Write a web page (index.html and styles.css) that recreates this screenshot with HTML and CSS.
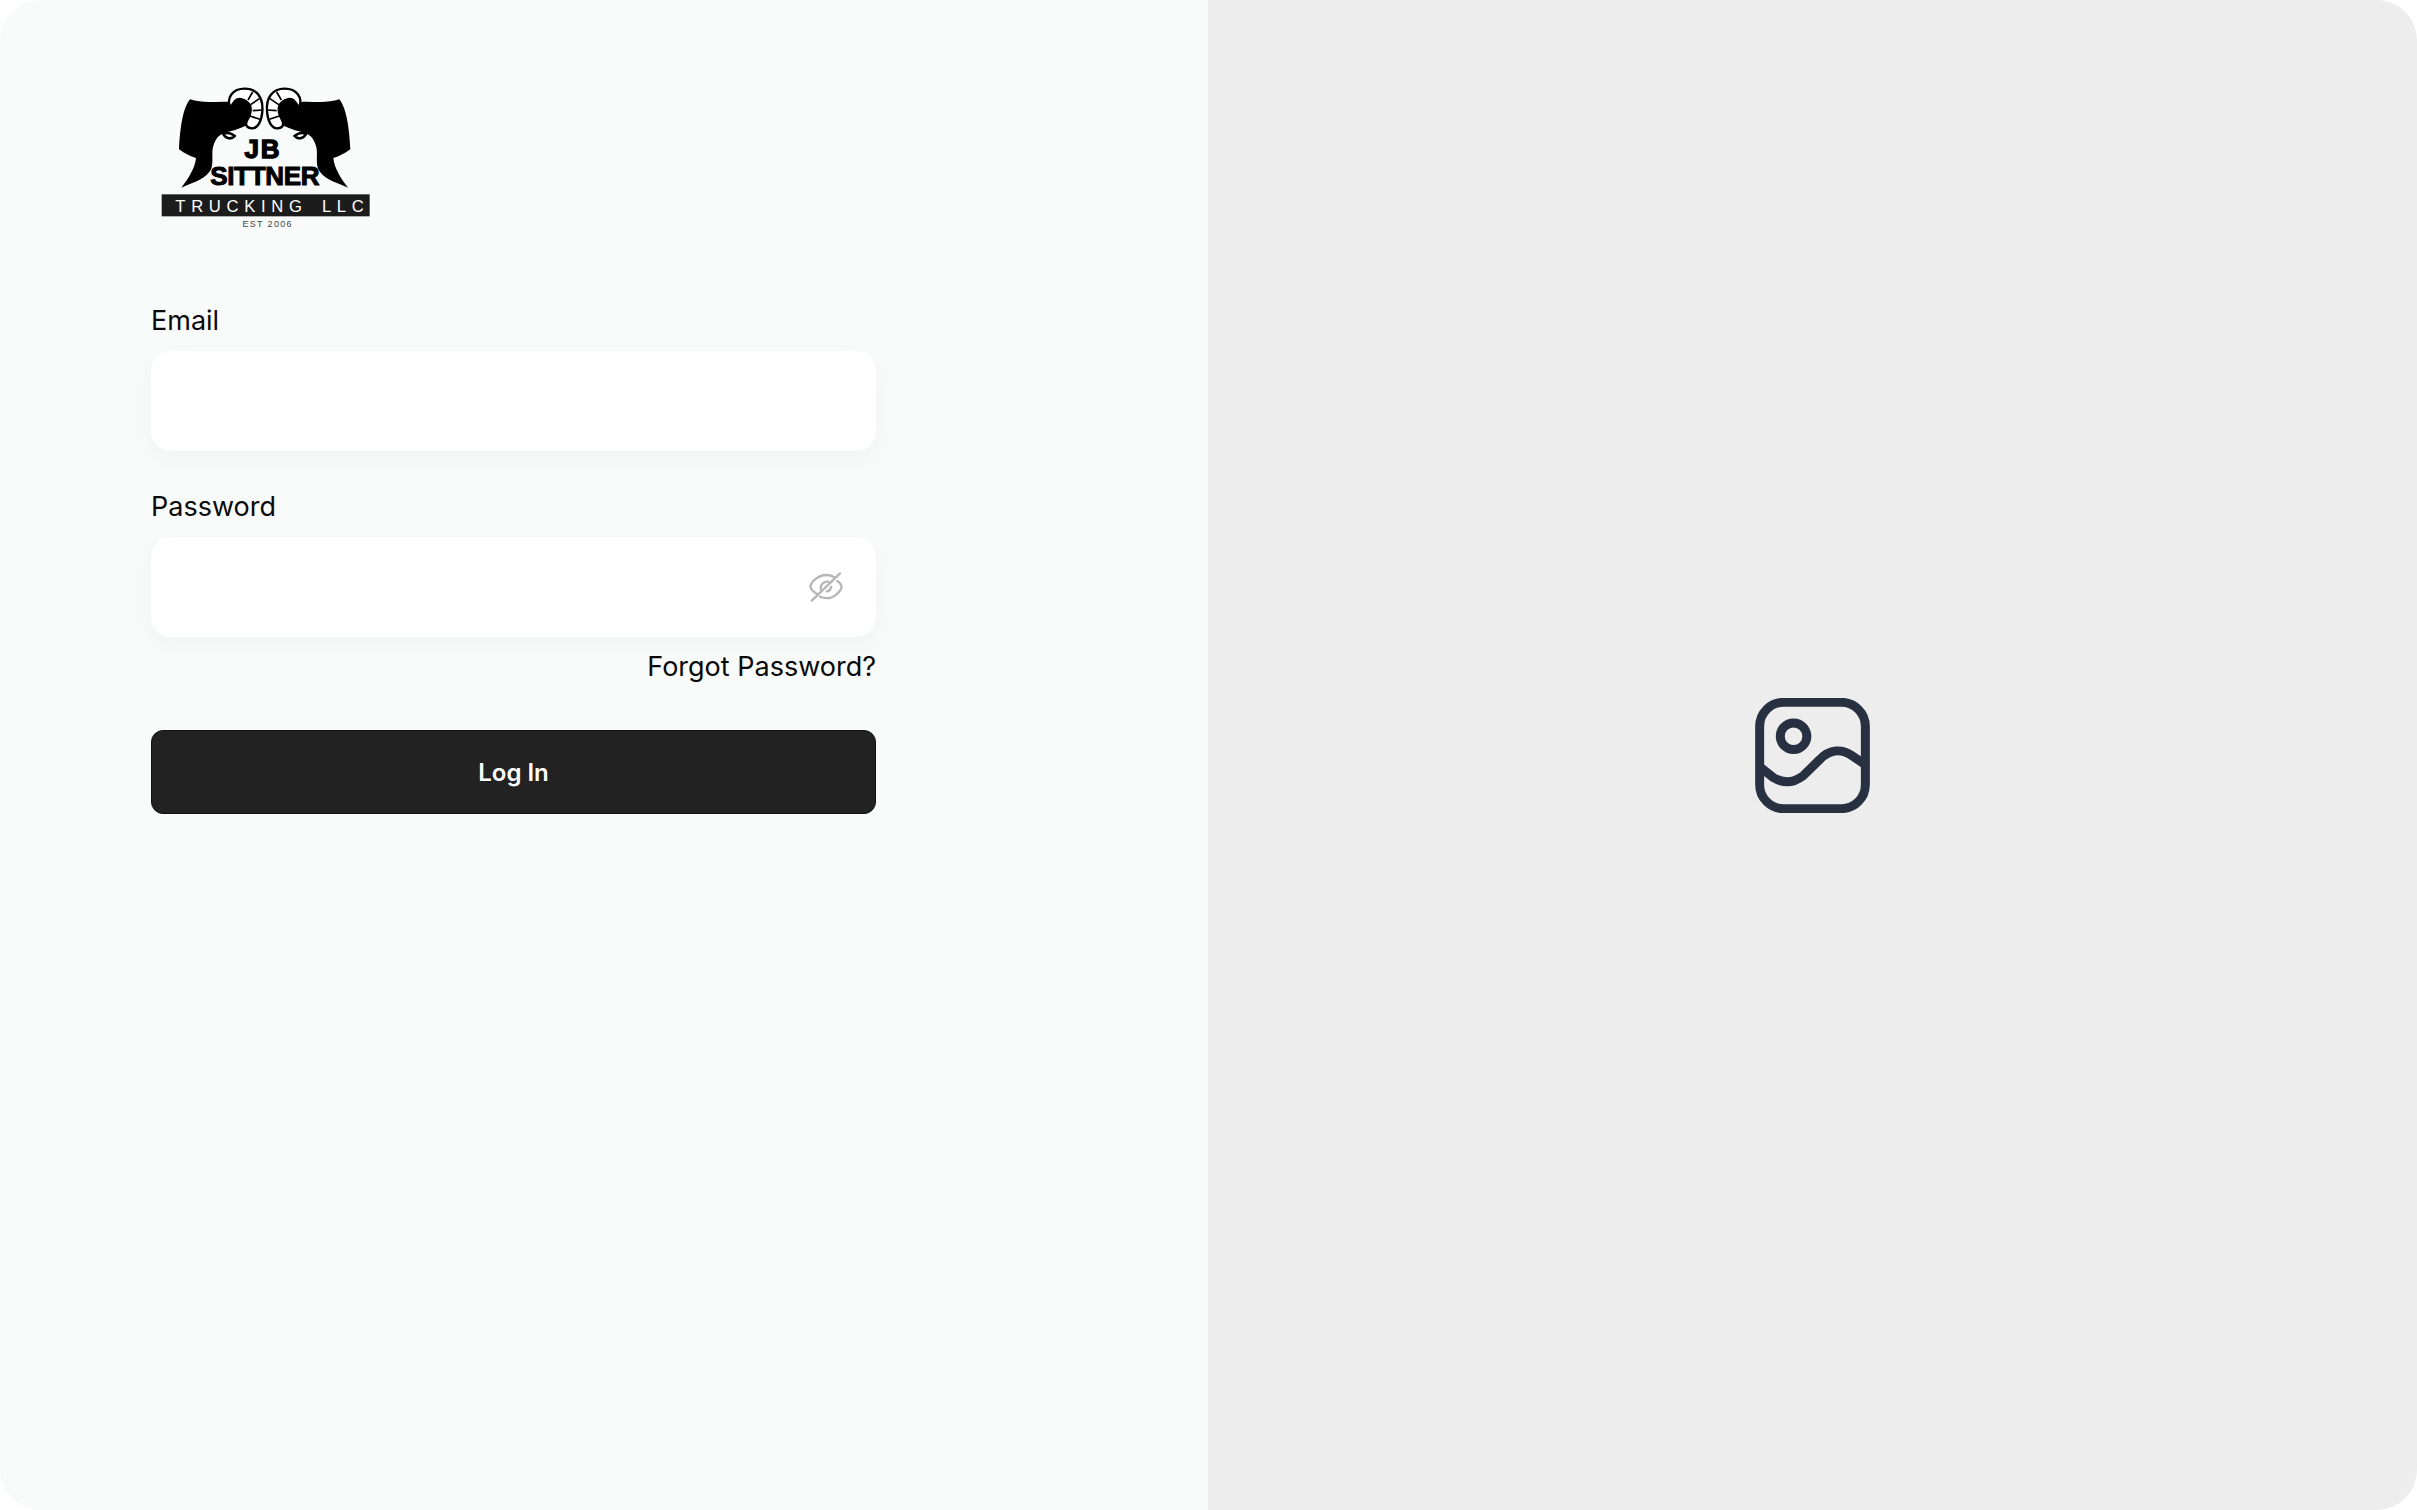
FILE: index.html
```html
<!DOCTYPE html>
<html lang="en">
<head>
    <meta charset="UTF-8">
    <meta name="viewport" content="width=device-width, initial-scale=1.0">
    <title>JB Sittner Trucking - Log In</title>
    <link rel="stylesheet" href="styles.css">
</head>
<body>

<div class="page">
    <div class="login-panel">
        <svg class="logo" viewBox="0 0 780 510" role="img" aria-label="JB Sittner Trucking LLC">
            <g id="ram">
                <path class="ram-body" d="M272 96 C232 92 190 102 150 88 C130 112 120 170 117 238 C135 252 150 258 168 264 C166 292 146 325 124 353 C165 335 200 325 214 296 C222 270 212 245 222 222 C228 205 240 190 262 186 C290 180 318 168 340 156 L345 90 C320 70 290 78 272 96 Z"/>
                <path class="ram-horn" d="M271 112 C258 84 278 56 314 56 C352 56 370 84 367 124 C365 152 354 175 336 175 C320 175 314 164 322 150 C330 136 336 122 330 106 C320 88 296 82 286 92 C280 98 276 106 271 112 Z"/>
                <path class="ram-line" d="M338 66 L324 90 M358 86 L332 104 M366 120 L338 122 M360 148 L330 138"/>
                <path class="ram-nose" d="M250 192 C262 186 276 190 284 198 C276 208 258 208 250 192 Z"/>
            </g>
            <use href="#ram" transform="translate(748 0) scale(-1 1)"/>
            <text class="logo-jb" x="369" y="265" text-anchor="middle">JB</text>
            <text class="logo-name" x="374" y="344" text-anchor="middle">SITTNER</text>
            <rect class="logo-bar" x="65" y="373" width="624" height="66"/>
            <text class="logo-trucking" x="106" y="427">TRUCKING LLC</text>
            <text class="logo-est" x="383" y="472" text-anchor="middle">EST 2006</text>
        </svg>

        <form class="login-form">
            <div class="field">
                <label class="field-label" for="email">Email</label>
                <input class="field-input" type="email" id="email">
            </div>

            <div class="field">
                <label class="field-label" for="password">Password</label>
                <div class="password-wrap">
                    <input class="field-input" type="password" id="password">
                    <svg class="eye-icon" viewBox="0 0 34 34" aria-hidden="true">
                        <path d="M8.6 25.4 C4.5 23 1.5 19.5 1.5 17.6 C1.5 13 9 6 17.5 6 C20.5 6 23 6.8 25.4 8.2"/>
                        <path d="M28.2 12 C31 14 32.5 16.2 32.5 17.6 C32.5 22 25 29.2 17.5 29.2 C15.2 29.2 13 28.6 11 27.8"/>
                        <path d="M12.2 21.4 C10.4 16.4 14 12 19.4 12.6"/>
                        <path d="M22.2 18 C21.8 20.4 20.2 22 17.8 22.4"/>
                        <path d="M2.8 31.6 L31 4.4"/>
                    </svg>
                </div>
                <a class="forgot-link" href="#">Forgot Password?</a>
            </div>

            <button class="login-btn" type="button">Log In</button>
        </form>
    </div>

    <div class="image-panel">
        <svg class="image-icon" viewBox="75 52 344 346" aria-hidden="true">
            <rect x="88" y="65" width="318" height="320" rx="72"/>
            <circle cx="190" cy="167" r="40"/>
            <path d="M90 260 L130 292 C160 310 190 308 220 285 L268 238 C300 205 335 205 365 225 L405 252"/>
        </svg>
    </div>
</div>

</body>
</html>
```

FILE: styles.css
```css
* {
    box-sizing: border-box;
}
body {
    margin: 0;
    background-color: #ffffff;
    font-family: 'Inter', sans-serif;
    color: #0a0a0a;
}
.page {
    display: flex;
    height: 1510px;
    border-radius: 40px;
    overflow: hidden;
}
.login-panel {
    width: 1208px;
    padding: 70px 0 0 151px;
    background-color: #f9fbfa;
}
.logo {
    display: block;
    width: 260px;
    height: 170px;
    margin-left: -11px;
}
.ram-body {
    fill: #000000;
}
.ram-horn {
    fill: #ffffff;
    stroke: #000000;
    stroke-width: 7;
}
.ram-line {
    fill: none;
    stroke: #000000;
    stroke-width: 5;
}
.ram-nose {
    fill: #ffffff;
    stroke: #000000;
    stroke-width: 8;
}
.logo-jb {
    font-family: 'Liberation Sans', sans-serif;
    font-weight: 700;
    font-size: 78px;
    letter-spacing: 6px;
    stroke: #000000;
    stroke-width: 4;
}
.logo-name {
    font-family: 'Liberation Sans', sans-serif;
    font-weight: 700;
    font-size: 78px;
    letter-spacing: -1px;
    stroke: #000000;
    stroke-width: 3;
}
.logo-bar {
    fill: #1c1c1c;
}
.logo-trucking {
    font-family: 'Liberation Sans', sans-serif;
    font-size: 50px;
    letter-spacing: 17px;
    word-spacing: 12px;
    fill: #ffffff;
}
.logo-est {
    font-family: 'Liberation Sans', sans-serif;
    font-size: 27px;
    letter-spacing: 4px;
    fill: #444444;
}
.login-form {
    width: 725px;
    margin-top: 66px;
}
.field {
    margin-bottom: 41px;
}
.field-label {
    display: block;
    margin-bottom: 15px;
    font-size: 27px;
    line-height: 30px;
}
.field-input {
    display: block;
    width: 100%;
    height: 100px;
    padding: 0 24px;
    border: none;
    border-radius: 20px;
    background: #ffffff;
    box-shadow: 0 8px 24px rgba(0, 0, 0, 0.035);
    font-family: 'Inter', sans-serif;
    font-size: 27px;
}
.password-wrap {
    position: relative;
}
.eye-icon {
    position: absolute;
    top: 32px;
    right: 33px;
    width: 34px;
    height: 34px;
    fill: none;
    stroke: #b6b6b6;
    stroke-width: 2.3;
    stroke-linecap: round;
}
.forgot-link {
    display: block;
    margin-top: 15px;
    text-align: right;
    font-size: 27px;
    line-height: 30px;
    color: #0a0a0a;
    text-decoration: none;
}
.login-btn {
    display: block;
    width: 100%;
    height: 84px;
    margin-top: 48px;
    border: 1px solid #111111;
    border-radius: 12px;
    background-color: #222222;
    color: #ffffff;
    font-family: 'Inter', sans-serif;
    font-size: 24px;
    font-weight: 600;
    cursor: pointer;
}
.image-panel {
    flex: 1;
    display: flex;
    align-items: center;
    justify-content: center;
    background-color: #ededed;
}
.image-icon {
    width: 115px;
    height: 115px;
    fill: none;
    stroke: #273142;
    stroke-width: 27;
    stroke-linecap: round;
}
```
